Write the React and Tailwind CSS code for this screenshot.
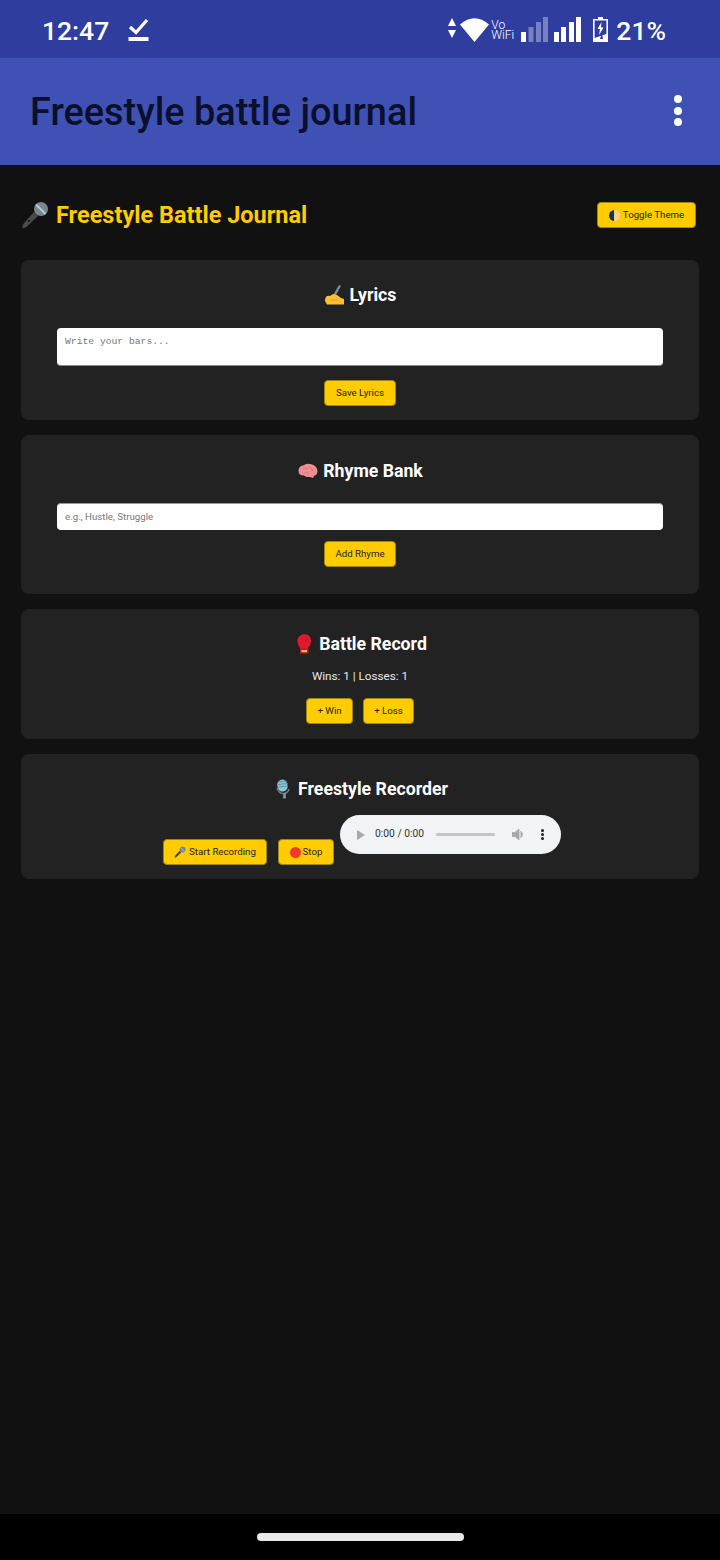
import React from "react";

const Btn = ({ children, className = "" }) => (
  <button className={`flex h-[26px] items-center justify-center rounded-[4px] border border-[#a08510] bg-[#ffcc00] text-[9.7px] leading-none text-[#222] ${className}`}>
    {children}
  </button>
);

const MicIcon = ({ s = 28 }) => (
  <svg width={s} height={s} viewBox="0 0 28 28" className="shrink-0">
    <path d="M1 26 L3 22 L13 11 L17 15 L6 25.5 L2.5 27.5 Z" fill="#4a4a4a" />
    <circle cx="8" cy="20" r="1.1" fill="#111" />
    <circle cx="20" cy="8" r="7" fill="#808387" />
    <path d="M15 3.5 L24.5 13" stroke="#9fd3e6" strokeWidth="2" />
  </svg>
);

const Hand = () => (
  <svg width="21" height="20" viewBox="0 0 21 20" className="shrink-0">
    <path d="M10 11 L16 0.5" stroke="#7f8c99" strokeWidth="2.4" />
    <path d="M1 16 Q1 10 6 11 L9 9 L13 10 L17 13 L20 14 L20 19.5 L3 19.5 Z" fill="#fdc02f" />
    <path d="M6 15 H15" stroke="#e09a1a" strokeWidth="0.8" />
  </svg>
);

const Brain = () => (
  <svg width="20" height="16" viewBox="0 0 20 16" className="shrink-0">
    <path d="M0.5 8 Q0.5 3 5 2.5 Q9 -0.5 14 1.5 Q19 3 19.5 8 Q19.5 12 16 13 L15 15 L12 14 Q8 14.5 6 12.5 Q0.5 12.5 0.5 8 Z" fill="#f08f93" />
    <path d="M5 6 Q8 4 10 7 M11 4 Q14 5 15 8 M6 10 Q9 9 11 11" stroke="#d9696f" strokeWidth="0.8" fill="none" />
  </svg>
);

const Glove = () => (
  <svg width="16" height="20" viewBox="0 0 16 20" className="shrink-0">
    <path d="M4 14 Q0 8 2 4 Q5 -1 11 0.5 Q15 2 15 7 Q15 11 12 14 Z" fill="#dd1a2e" />
    <path d="M11 4 Q9 6 10 8" stroke="#a30f20" strokeWidth="0.8" fill="none" />
    <rect x="4" y="14" width="8.5" height="5.5" fill="#c9162a" />
    <rect x="5.5" y="16" width="5.5" height="2.2" fill="#f4c430" />
  </svg>
);

const StudioMic = () => (
  <svg width="16" height="20" viewBox="0 0 16 20" className="shrink-0">
    <rect x="2.5" y="0.5" width="10" height="12" rx="5" transform="rotate(-10 8 7)" fill="#8ec6d4" />
    <path d="M3 3 L12 2 M3 5.5 L13 4.5 M3.5 8 L13 7" stroke="#4e8596" strokeWidth="0.8" />
    <path d="M2 9 Q4 15 9 14.5 Q13 14 14 10" stroke="#6f7f86" strokeWidth="1.4" fill="none" />
    <rect x="8" y="14" width="3" height="5.5" fill="#6f8f9b" />
  </svg>
);

const Card = ({ className = "", children }) => (
  <section className={`mb-[15px] flex flex-col items-center rounded-[8px] bg-[#222222] px-9 ${className}`}>{children}</section>
);

const Title = ({ icon, children }) => (
  <h2 className="flex items-center gap-[5px] text-[17.7px] font-bold leading-[24px] text-white">
    <span className="flex w-[21px] justify-center">{icon}</span>
    <span>{children}</span>
  </h2>
);

export default function App() {
  return (
    <div className="flex h-[1560px] w-[720px] flex-col bg-[#111111] font-['Roboto',sans-serif]">
      <div className="flex h-[58px] shrink-0 items-center justify-between bg-[#2f3e9e] pl-[42px] pr-[54px] pt-[3px] text-white">
        <div className="flex items-center gap-[19px]">
          <span className="mt-[2px] text-[26.5px] font-medium leading-none">12:47</span>
          <svg width="21" height="25" viewBox="0 0 21 25" className="mt-[-2px]">
            <path d="M2 10 L8 15.5 L19 3" stroke="#fff" strokeWidth="3.2" fill="none" />
            <rect x="0.5" y="20" width="20" height="4" fill="#fff" />
          </svg>
        </div>
        <div className="flex items-center">
          <svg width="8" height="20" viewBox="0 0 8 20" className="mr-[4px] mt-[-5px]">
            <path d="M4 0 L8 8 L0 8 Z M0 12 L8 12 L4 20 Z" fill="#fff" />
          </svg>
          <svg width="29" height="25" viewBox="0 0 29 25" className="mt-[-2px]">
            <path d="M0 7.5 Q14.5 -5 29 7.5 L14.5 25 Z" fill="#fff" />
          </svg>
          <div className="ml-[2px] mt-[-1px] w-[21px] text-[12px] font-light leading-[10px] text-white">
            Vo
            <br />
            WiFi
          </div>
          <svg width="60" height="25" viewBox="0 0 60 25" className="ml-[9px] mt-[-2px]">
            <g fill="#fff">
              <rect x="0" y="15" width="5" height="10" />
              <rect x="7.5" y="10" width="5" height="15" opacity="0.35" />
              <rect x="15" y="5" width="5" height="20" opacity="0.35" />
              <rect x="22" y="0" width="5" height="25" opacity="0.35" />
              <rect x="33" y="15" width="5" height="10" />
              <rect x="40" y="10" width="5" height="15" />
              <rect x="48" y="5" width="5" height="20" />
              <rect x="55" y="0" width="5" height="25" />
            </g>
          </svg>
          <svg width="15" height="25" viewBox="0 0 15 25" className="ml-[12px] mt-[-2px]">
            <path d="M5 0 H10 V2 H15 V25 H0 V2 H5 Z" fill="#fff" />
            <path d="M1.6 3.6 H13.4 V17 L1.6 21 Z" fill="#2f3e9e" />
            <path d="M8.5 5 L4.5 12 H7 L6 18 L10.5 10.5 H8 Z" fill="#fff" />
            <path d="M9 16 L7 22 H10 Z" fill="#2f3e9e" />
          </svg>
          <span className="ml-[8px] mt-[2px] text-[26.5px] font-medium leading-none">21%</span>
        </div>
      </div>

      <header className="flex h-[107px] shrink-0 items-center justify-between bg-[#3f51b5] pl-[30px] pr-[38px] pt-[3px]">
        <h1 className="text-[37.9px] font-medium leading-none text-[#0a0f2c]">Freestyle battle journal</h1>
        <div className="mt-[-5px] flex flex-col gap-[3.5px]">
          <span className="h-2 w-2 rounded-full bg-white" />
          <span className="h-2 w-2 rounded-full bg-white" />
          <span className="h-2 w-2 rounded-full bg-white" />
        </div>
      </header>

      <main className="flex-1 px-[21px]">
        <div className="mb-[32px] mt-[37px] flex h-[26px] items-center justify-between pr-[3px]">
          <div className="flex items-center gap-[7px]">
            <MicIcon />
            <span className="mt-[2px] text-[23.5px] font-bold leading-none text-[#ffcc00]">Freestyle Battle Journal</span>
          </div>
          <Btn className="w-[99px] gap-[3px]">
            <span className="relative block h-[11px] w-[11px] overflow-hidden rounded-full bg-[#f6cf8e]">
              <span className="block h-full w-1/2 bg-[#1d3340]" />
            </span>
            Toggle Theme
          </Btn>
        </div>

        <Card className="h-[160px] pt-[23px]">
          <Title icon={<Hand />}>Lyrics</Title>
          <textarea
            readOnly
            placeholder="Write your bars..."
            className="mt-[21px] h-[38px] w-full resize-none rounded-[4px] border-b border-[#888] bg-white px-2 py-[8px] font-['Liberation_Mono',monospace] text-[9.7px] leading-[11px] placeholder:text-[#777]"
          />
          <Btn className="mt-[14px] w-[72px]">Save Lyrics</Btn>
        </Card>

        <Card className="h-[159px] pt-[24px]">
          <Title icon={<Brain />}>Rhyme Bank</Title>
          <input
            readOnly
            placeholder="e.g., Hustle, Struggle"
            className="mt-[20px] h-[27px] w-full rounded-[4px] border-t border-[#999] bg-white px-2 pb-[2px] text-[9.7px] placeholder:text-[#777]"
          />
          <Btn className="mt-[11px] w-[72px]">Add Rhyme</Btn>
        </Card>

        <Card className="h-[130px] pt-[23px]">
          <Title icon={<Glove />}>Battle Record</Title>
          <p className="mt-[13px] text-[11.7px] leading-[14px] text-[#e8e8e8]">Wins: 1 | Losses: 1</p>
          <div className="mt-[15px] flex gap-[10px]">
            <Btn className="w-[47px]">+ Win</Btn>
            <Btn className="w-[51px]">+ Loss</Btn>
          </div>
        </Card>

        <Card className="h-[125px] pt-[23px]">
          <Title icon={<StudioMic />}>Freestyle Recorder</Title>
          <div className="ml-[4px] mt-[14px] flex items-start">
            <Btn className="mt-[24px] w-[104px] gap-[3px]">
              <MicIcon s={12} />
              Start Recording
            </Btn>
            <Btn className="ml-[11px] mt-[24px] w-[56px] gap-[2px]">
              <span className="h-[11px] w-[11px] rounded-full bg-[#f03a2e]" />
              Stop
            </Btn>
            <div className="ml-[6px] flex h-[39px] w-[221px] items-center rounded-full bg-[#f1f3f4] pl-[17px] text-[#333]">
              <svg width="8" height="10" viewBox="0 0 8 10">
                <path d="M0 0 L8 5 L0 10 Z" fill="#a8a9aa" />
              </svg>
              <span className="ml-[10px] text-[10.3px] leading-none">0:00 / 0:00</span>
              <span className="ml-[12px] h-[3px] w-[59px] rounded-full bg-[#c4c5c6]" />
              <svg width="13" height="11" viewBox="0 0 13 11" className="ml-[17px]">
                <path d="M0 3.5 H3 L7 0 V11 L3 7.5 H0 Z M8.5 2 Q12.5 5.5 8.5 9" fill="#a8a9aa" stroke="#a8a9aa" strokeWidth="0.8" />
              </svg>
              <div className="ml-[16px] flex flex-col gap-[1.5px]">
                <span className="h-[2.5px] w-[2.5px] rounded-full bg-[#222]" />
                <span className="h-[2.5px] w-[2.5px] rounded-full bg-[#222]" />
                <span className="h-[2.5px] w-[2.5px] rounded-full bg-[#222]" />
              </div>
            </div>
          </div>
        </Card>
      </main>

      <footer className="flex h-[46px] shrink-0 items-center justify-center bg-black">
        <span className="h-2 w-[207px] rounded-full bg-[#e8e8e8]" />
      </footer>
    </div>
  );
}
